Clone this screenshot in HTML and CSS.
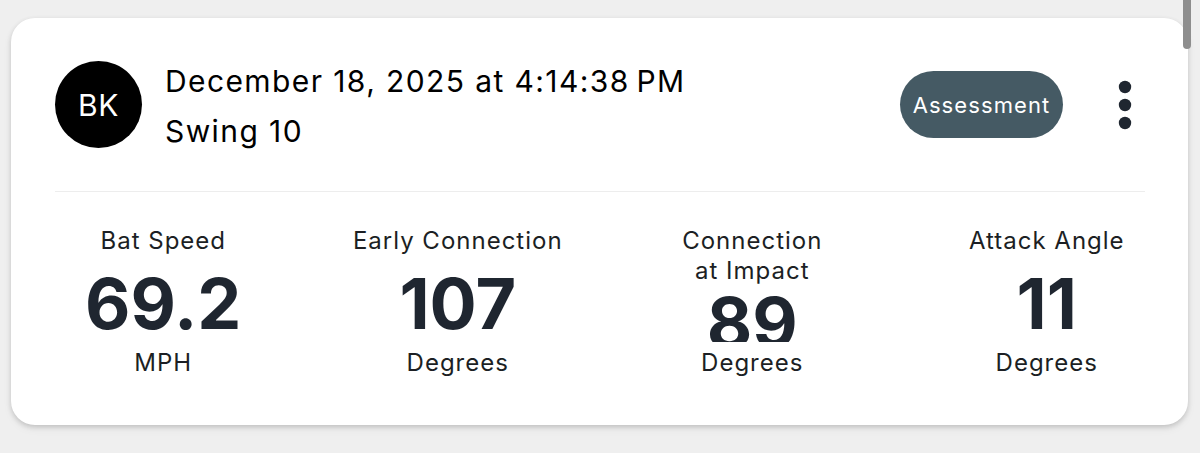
FILE: index.html
```html
<!DOCTYPE html>
<html lang="en">
<head>
<meta charset="utf-8">
<title>Swing 10</title>
<link rel="stylesheet" href="styles.css">
</head>
<body>
<div class="page">
  <section class="card">
    <header class="card-header">
      <div class="avatar">BK</div>
      <div class="title-block">
        <div class="title-date">December 18, 2025 at 4:14:38&#8239;PM</div>
        <div class="title-swing">Swing 10</div>
      </div>
      <button class="pill">Assessment</button>
      <button class="kebab" aria-label="More">
        <svg width="14" height="50" viewBox="0 0 14 50"><circle cx="7" cy="7" r="6.2"/><circle cx="7" cy="25" r="6.2"/><circle cx="7" cy="43" r="6.2"/></svg>
      </button>
    </header>
    <hr class="divider">
    <div class="stats">
      <div class="stat">
        <div class="stat-label">Bat Speed</div>
        <div class="stat-value">69.2</div>
        <div class="stat-unit">MPH</div>
      </div>
      <div class="stat">
        <div class="stat-label">Early Connection</div>
        <div class="stat-value">107</div>
        <div class="stat-unit">Degrees</div>
      </div>
      <div class="stat">
        <div class="stat-label">Connection<br>at Impact</div>
        <div class="stat-value stat-value--squeezed">89</div>
        <div class="stat-unit">Degrees</div>
      </div>
      <div class="stat">
        <div class="stat-label">Attack Angle</div>
        <div class="stat-value">11</div>
        <div class="stat-unit">Degrees</div>
      </div>
    </div>
  </section>
  <div class="scroll-thumb"></div>
</div>
</body>
</html>
```

FILE: styles.css
```css
* { box-sizing: border-box; }
html, body {
  margin: 0;
  padding: 0;
  background: #efefef;
  font-family: "Inter", "Liberation Sans", sans-serif;
}
.page {
  position: relative;
  width: 1200px;
  height: 453px;
  padding: 18px 0 0 11px;
}
.card {
  width: 1177px;
  height: 407px;
  background: #ffffff;
  border-radius: 24px;
  box-shadow: 0 2px 5px rgba(0,0,0,0.16), 0 4px 10px rgba(0,0,0,0.05);
  padding: 43px 0 0 0;
}
.card-header {
  display: flex;
  align-items: center;
  height: 87px;
  padding: 0 43px 0 44px;
}
.avatar {
  width: 87px;
  height: 87px;
  border-radius: 50%;
  background: #000;
  color: #fff;
  display: flex;
  align-items: center;
  justify-content: center;
  font-size: 30px;
  letter-spacing: 0.5px;
  flex: none;
}
.title-block {
  margin-left: 23px;
  margin-top: 2px;
  flex: 1;
  color: #000;
  font-size: 30px;
  line-height: 50px;
  letter-spacing: 1.4px;
}
.pill {
  border: none;
  background: #455a64;
  color: #fff;
  font-family: inherit;
  font-size: 22px;
  letter-spacing: 1.1px;
  width: 163px;
  height: 67px;
  border-radius: 34px;
  padding: 0;
  flex: none;
}
.kebab {
  border: none;
  background: transparent;
  width: 40px;
  height: 60px;
  margin-left: 42px;
  padding: 0;
  display: flex;
  align-items: center;
  justify-content: center;
  fill: #1f2630;
  flex: none;
}
.divider {
  border: none;
  height: 1px;
  background: #ededed;
  margin: 43px 43px 0 44px;
}
.stats {
  display: grid;
  grid-template-columns: repeat(4, 294.5px);
  margin: 34px 0 0 5px;
  color: #1c1f24;
}
.stat {
  display: flex;
  flex-direction: column;
  align-items: center;
  text-align: center;
}
.stat-label {
  font-size: 24px;
  line-height: 30px;
  letter-spacing: 1px;
}
.stat-value {
  font-size: 70px;
  font-weight: 700;
  line-height: 84px;
  height: 86px;
  margin-top: 6px;
  overflow: hidden;
  color: #1f2630;
}
.stat-value--squeezed {
  margin-top: -5.5px;
  height: 61.5px;
  margin-bottom: 6px;
}
.stat-unit {
  font-size: 24px;
  line-height: 30px;
  letter-spacing: 1px;
}
.scroll-thumb {
  position: absolute;
  top: 0;
  left: 1183px;
  width: 8px;
  height: 49px;
  border-radius: 0 0 4px 4px;
  background: #8e8e8e;
}
```
